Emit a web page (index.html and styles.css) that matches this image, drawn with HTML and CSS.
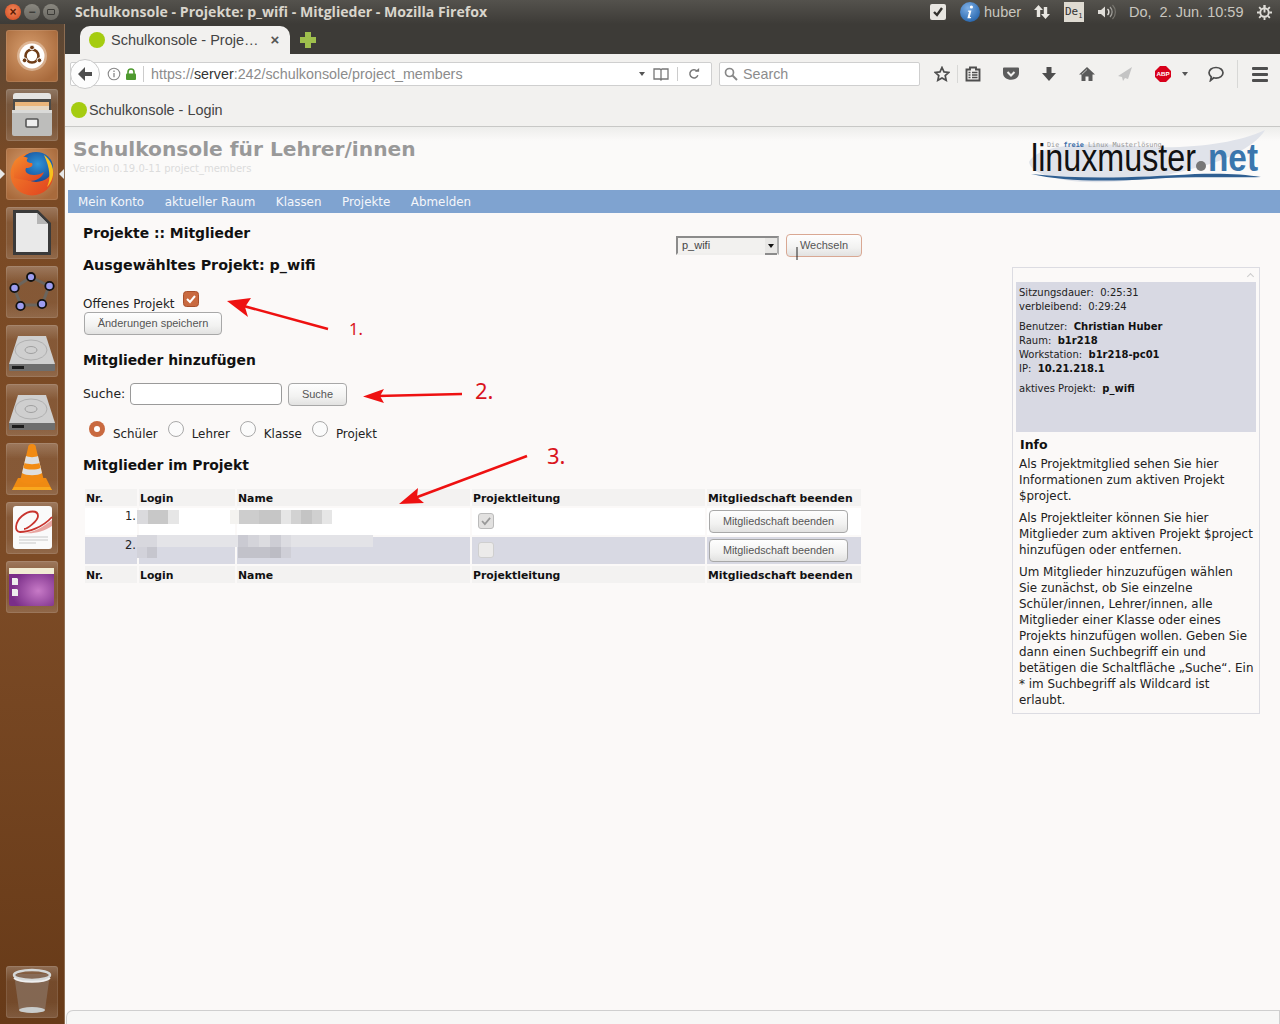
FILE: index.html
```html
<!DOCTYPE html>
<html lang="de">
<head>
<meta charset="utf-8">
<title>Schulkonsole - Projekte: p_wifi - Mitglieder</title>
<link rel="stylesheet" href="styles.css">
</head>
<body>
<header class="topbar">
  <div class="winbtns">
    <span class="wb wb-close">×</span>
    <span class="wb wb-min">−</span>
    <span class="wb wb-max"><i class="wb-sq"></i></span>
  </div>
  <div class="wintitle">Schulkonsole - Projekte: p_wifi - Mitglieder - Mozilla Firefox</div>
  <div class="indicators">
    <svg class="ind-check" viewBox="0 0 16 16"><rect width="16" height="16" rx="2" fill="#e8e6e1"/><path d="M4 8l3 3 5-7" fill="none" stroke="#33322e" stroke-width="2.4"/></svg>
    <svg class="ind-info" viewBox="0 0 20 20"><defs><radialGradient id="ig" cx=".4" cy=".3" r=".8"><stop offset="0" stop-color="#7fb0e6"/><stop offset="1" stop-color="#1f5fa8"/></radialGradient></defs><circle cx="10" cy="10" r="10" fill="url(#ig)"/><circle cx="11.4" cy="5" r="1.6" fill="#fff"/><path d="M8.2 8.6h3.2l-1.6 6.4h1.4l-.4 1.2H7.4l1.7-6.5H7.8z" fill="#fff"/></svg>
    <span class="ind-user">huber</span>
    <svg class="ind-arrows" viewBox="0 0 16 16"><path d="M4.5 1L9 6H6.2v7H2.8V6H0z" fill="#e8e6e1"/><path d="M11.5 15L7 10h2.8V3h3.4v7H16z" fill="#e8e6e1"/></svg>
    <span class="ind-lang">De<sub class="ind-sub">1</sub></span>
    <svg class="ind-vol" viewBox="0 0 20 16"><path d="M1 6h3l4-3.500v11L4 10H1z" fill="#dfddd8"/><path d="M10.500 5a4 4 0 0 1 0 6" fill="none" stroke="#dfddd8" stroke-width="1.500"/><path d="M13 3a7 7 0 0 1 0 10" fill="none" stroke="#a5a39e" stroke-width="1.200"/><path d="M15.500 1a10 10 0 0 1 0 14" fill="none" stroke="#77756f" stroke-width="1.200"/></svg>
    <span class="ind-date">Do,&nbsp; 2. Jun. 10:59</span>
    <svg class="ind-gear" viewBox="0 0 16 16"><g fill="none" stroke="#dfddd8"><circle cx="8" cy="8" r="4.500" stroke-width="2"/><path d="M8 0v3M8 13v3M0 8h3M13 8h3M2.300 2.300l2.100 2.100M11.600 11.600l2.100 2.100M2.300 13.700l2.100-2.100M11.600 4.400l2.100-2.100" stroke-width="2"/></g><rect x="7" y="0" width="2" height="8" fill="#dfddd8"/></svg>
  </div>
</header>

<div class="desk">
  <nav class="launcher">
    <div class="tile tile-on">
      <svg viewBox="0 0 52 52"><circle cx="26" cy="26" r="15" fill="#f4e3d2" opacity=".45"/><circle cx="26" cy="26" r="12.500" fill="#fff"/><circle cx="26" cy="26" r="6.500" fill="none" stroke="#6e3c17" stroke-width="2.600"/><g fill="#6e3c17" stroke="#fff" stroke-width="1"><circle cx="26" cy="17.500" r="2.400"/><circle cx="18.600" cy="30.300" r="2.400"/><circle cx="33.400" cy="30.300" r="2.400"/></g></svg>
    </div>
    <div class="tile">
      <svg viewBox="0 0 52 52"><path d="M7 7a3 3 0 0 1 3-3h32a3 3 0 0 1 3 3v4H7z" fill="#e4e4e2"/><rect x="7" y="10" width="38" height="14" fill="#4a4a48"/><rect x="9" y="13" width="34" height="5" fill="#eab57a"/><rect x="9" y="17" width="34" height="5" fill="#e6d7c2"/><rect x="6" y="21" width="40" height="26" rx="2" fill="#bdbdbb"/><rect x="6" y="21" width="40" height="3" fill="#dadad8"/><rect x="20" y="30" width="12" height="8" rx="1" fill="#eee" stroke="#555" stroke-width="1.600"/></svg>
    </div>
    <div class="tile tile-on tile-ff">
      <svg viewBox="0 0 52 52"><defs><radialGradient id="ffb" cx=".55" cy=".4" r=".7"><stop offset="0" stop-color="#2f95d8"/><stop offset="1" stop-color="#123f8c"/></radialGradient><linearGradient id="ffo" x1="0" y1="0" x2="1" y2="1"><stop offset="0" stop-color="#f58a2c"/><stop offset="1" stop-color="#e0401f"/></linearGradient></defs><circle cx="26" cy="26" r="21.500" fill="url(#ffo)"/><ellipse cx="30" cy="19" rx="17" ry="15" fill="url(#ffb)"/><path d="M8 14C12 8 18 8 22 10c-3 3 0 5 4 5 2 3-2 5-6 5-2 4 2 7 8 7 4 0 7-1 10-3-2 6-8 9-14 9L8 30z" fill="url(#ffo)"/><path d="M38 7c6 4 10 12 9 20-1 6-4 10-6 12 4-8 3-19-3-32z" fill="#f8c21e"/></svg>
    </div>
    <div class="tile">
      <svg viewBox="0 0 52 52"><path d="M7 3h25l13 13v32H7z" fill="#3a3a3a"/><path d="M10 6h21l11 11v28H10z" fill="#e9e9e9"/><path d="M31 6v11h11z" fill="#b5b5b5"/></svg>
    </div>
    <div class="tile">
      <svg viewBox="0 0 52 52"><path d="M25 11L43 20 36 39H15L8 22z" fill="none" stroke="#6b655d" stroke-width="3"/><g fill="#9d9df0" stroke="#111" stroke-width="1.800"><circle cx="25" cy="11" r="4"/><circle cx="43.500" cy="20" r="4.200"/><circle cx="36" cy="38" r="4.200"/><circle cx="14.500" cy="40" r="4.200"/><circle cx="8.500" cy="22" r="4.200"/></g></svg>
    </div>
    <div class="tile">
      <svg viewBox="0 0 52 52"><use href="#disk"/></svg>
    </div>
    <div class="tile">
      <svg viewBox="0 0 52 52"><defs><g id="disk"><path d="M12 11h28l9 28v6H3v-6z" fill="#cfcfcf"/><path d="M3 39h46v6a1 1 0 0 1-1 1H4a1 1 0 0 1-1-1z" fill="#6e6e6e"/><rect x="6" y="41" width="12" height="3" fill="#1c1c1c"/><ellipse cx="25" cy="25" rx="16" ry="10" fill="none" stroke="#b0b0b0"/><ellipse cx="25" cy="25" rx="6" ry="3.500" fill="none" stroke="#a0a0a0"/></g></defs><use href="#disk"/></svg>
    </div>
    <div class="tile">
      <svg viewBox="0 0 52 52"><path d="M6 47l6-12h28l6 12z" fill="#ef8a12"/><path d="M14 38c4 4 20 4 24 0l-8-33a4 4 0 0 0-8 0z" fill="#f28b13"/><path d="M20 13l-4 17c4 3 16 3 20 0l-4-17c-3 1.500-9 1.500-12 0z" fill="#dedede"/><path d="M18.500 20c3 1.500 12 1.500 15 0l1 5c-4 2-13 2-17 0z" fill="#f28b13"/><path d="M6 47h40l-2-3H8z" fill="#f9a81e"/></svg>
    </div>
    <div class="tile">
      <svg viewBox="0 0 52 52"><rect x="7" y="4" width="39" height="43" rx="3" fill="#fafafa"/><path d="M46 15C36 26 22 30 14 30 8 30 9 20 16 14s16-6 16 0c0 5-11 13-14 13" fill="none" stroke="#c8342e" stroke-width="1.800"/><path d="M17 31c10 0 20-6 29-13v6c-9 6-18 8-29 7z" fill="#e8a5a0"/><path d="M13 35h29M13 38h29M13 41h17" stroke="#bbb" stroke-width=".8"/></svg>
    </div>
    <div class="tile">
      <svg viewBox="0 0 52 52"><defs><radialGradient id="pg" cx=".65" cy=".6" r=".6"><stop offset="0" stop-color="#c77ac7"/><stop offset="1" stop-color="#7a2e88"/></radialGradient></defs><rect x="3" y="7" width="45" height="38" rx="2" fill="url(#pg)"/><rect x="3" y="7" width="45" height="6" fill="#f1ecd4"/><path d="M6 17h5l1 1v6H6zM6 28h5l1 1v6H6z" fill="#eee"/></svg>
    </div>
    <div class="tile tile-trash">
      <svg viewBox="0 0 52 52"><path d="M8 8l5 36c2 3 24 3 26 0l5-36z" fill="#8a7464" opacity=".7"/><ellipse cx="26" cy="44" rx="13" ry="3" fill="#c9cccc"/><ellipse cx="26" cy="9" rx="18" ry="5" fill="none" stroke="#d5d8d8" stroke-width="2.500"/><path d="M8 12c6 5 30 5 36 0" fill="none" stroke="#efefef" stroke-width="2"/></svg>
    </div>
  </nav>

  <main class="browser">
    <div class="tabstrip">
      <div class="tab">
        <span class="favdot"></span>
        <span class="tab-title">Schulkonsole - Proje…</span>
        <span class="tab-close">×</span>
      </div>
      <svg class="newtab" viewBox="0 0 16 16"><path d="M5 0h6v5h5v6h-5v5H5v-5H0V5h5z" fill="#9fbf4d"/></svg>
    </div>

    <div class="toolbar">
      <div class="backbtn"><svg viewBox="0 0 16 16"><path d="M8 1L1 8l7 7V10h7V6H8z" fill="#4e4e4e"/></svg></div>
      <div class="urlbar">
        <svg class="u-info" viewBox="0 0 14 14"><circle cx="7" cy="7" r="5.800" fill="none" stroke="#888" stroke-width="1.100"/><path d="M7 6v4.200M7 3.500v1.400" stroke="#888" stroke-width="1.300"/></svg>
        <svg class="u-lock" viewBox="0 0 12 12"><path d="M3 6V4a3 3 0 0 1 6 0v2" fill="none" stroke="#4e9a2f" stroke-width="1.600"/><rect x="1" y="5.500" width="10" height="6.500" rx="1" fill="#4e9a2f"/></svg>
        <span class="u-sep"></span>
        <span class="u-text">https://<b class="u-host">server</b>:242/schulkonsole/project_members</span>
        <span class="u-drop"></span>
        <svg class="u-reader" viewBox="0 0 16 14"><path d="M1 2h6l1 1 1-1h6v10H9l-1 1-1-1H1zM8 3v9" fill="none" stroke="#777" stroke-width="1.300"/></svg>
        <span class="u-sep u-sep2"></span>
        <svg class="u-reload" viewBox="0 0 14 14"><path d="M11.500 8.500A4.800 4.800 0 1 1 10.500 3.500" fill="none" stroke="#777" stroke-width="1.700"/><path d="M8 4.500h5V0z" fill="#777"/></svg>
      </div>
      <div class="searchbar">
        <svg class="s-icon" viewBox="0 0 14 14"><circle cx="5.500" cy="5.500" r="4" fill="none" stroke="#888" stroke-width="1.700"/><path d="M8.500 8.500l4.500 4.500" stroke="#888" stroke-width="2"/></svg>
        <span class="s-text">Search</span>
      </div>
      <svg class="ti ti-star" viewBox="0 0 16 16"><path d="M8 1.500l2 4.400 4.800.5-3.600 3.200 1 4.700L8 11.900l-4.200 2.400 1-4.700L1.200 6.400 6 5.900z" fill="none" stroke="#4e4e4e" stroke-width="1.700"/></svg>
      <span class="ti-sep"></span>
      <svg class="ti ti-clip" viewBox="0 0 16 16"><path d="M1.500 3.500h3.500V1.500h6v2h3.500v11h-13z" fill="none" stroke="#4e4e4e" stroke-width="1.900"/><path d="M3.500 6.500h2M7 6.500h5.500M3.500 9h2M7 9h5.500M3.500 11.500h2M7 11.500h5.500" stroke="#4e4e4e" stroke-width="1.500"/></svg>
      <svg class="ti ti-gap" viewBox="0 0 16 16"><path d="M1 1.500h14a1 1 0 0 1 1 1V7c0 9-16 9-16 0V2.500a1 1 0 0 1 1-1z" fill="#5c5c5c"/><path d="M4.500 6L8 9.500 11.500 6" fill="none" stroke="#f1f0ee" stroke-width="2"/></svg>
      <svg class="ti ti-gap" viewBox="0 0 16 16"><path d="M5.500 1h5v6H15l-7 8-7-8h4.500z" fill="#4e4e4e"/></svg>
      <svg class="ti ti-gap" viewBox="0 0 16 16"><path d="M8 1L0 8.500h2.500V15h4v-4.500h3V15h4V8.500H16z" fill="#5a5a5a"/><path d="M8 3.500L3 8.200" stroke="#f1f0ee" stroke-width=".7"/></svg>
      <svg class="ti ti-gap" viewBox="0 0 16 16"><path d="M15 1L1 10l4 1 1 4 2-3 3 1z" fill="#c4c4c4"/></svg>
      <svg class="ti ti-gap" viewBox="0 0 16 16"><path d="M5 0h6l5 5v6l-5 5H5l-5-5V5z" fill="#d8001b"/><text x="8" y="10.300" class="abp">ABP</text></svg>
      <span class="abp-drop"></span>
      <svg class="ti ti-bubble" viewBox="0 0 16 16"><path d="M8 1.500c3.900 0 7 2.300 7 5.300s-3.100 5.300-7 5.300c-.8 0-1.500-.1-2.200-.3L2.500 14.500l.8-3.500C1.900 9.900 1 8.500 1 6.800 1 3.800 4.100 1.500 8 1.500z" fill="none" stroke="#4e4e4e" stroke-width="1.700"/></svg>
      <span class="ti-sep ti-sep2"></span>
      <span class="hamburger"><i></i><i></i><i></i></span>
    </div>

    <div class="bookmarks">
      <span class="favdot"></span>
      <span class="bm-title">Schulkonsole - Login</span>
    </div>

    <div class="page">
      <div class="sitehead">
        <div class="sitetitle">
          <div class="sitename">Schulkonsole für Lehrer/innen</div>
          <div class="siteversion">Version 0.19.0-11 project_members</div>
        </div>
        <svg class="logo" viewBox="0 0 240 53">
          <path d="M4 32C14 14 60 12 110 16 160 20 210 14 240 0 232 14 205 30 170 38 120 52 70 55 40 50 20 46 6 42 4 32z" fill="#e0e3ea"/>
          <text x="22" y="17" class="logo-tag">Die <tspan class="logo-free">freie</tspan> Linux Musterlösung</text>
          <text x="6" y="41" class="logo-main" textLength="165" lengthAdjust="spacingAndGlyphs">linuxmuster</text>
          <circle cx="176" cy="36" r="5" fill="#777"/>
          <text x="183" y="41" class="logo-net" textLength="50" lengthAdjust="spacingAndGlyphs">net</text>
          <path d="M6 44C60 50 120 47 170 44c25-1 50 0 66 3-30 1-70-1-110 2-50 3-90 2-120-5z" fill="#2f5f92"/>
        </svg>
      </div>

      <div class="mainnav">
        <a class="navlink">Mein Konto</a>
        <a class="navlink">aktueller Raum</a>
        <a class="navlink">Klassen</a>
        <a class="navlink">Projekte</a>
        <a class="navlink">Abmelden</a>
      </div>

      <div class="columns">
        <section class="leftcol">
          <div class="headrow">
            <h2 class="heading">Projekte :: Mitglieder</h2>
            <div class="switcher">
              <div class="selectbox"><span class="select-val">p_wifi</span><span class="select-arrow"></span></div>
              <button class="btn btn-hover">Wechseln</button>
            </div>
          </div>
          <h3 class="heading heading-wide">Ausgewähltes Projekt: p_wifi</h3>
          <div class="openrow">
            <span class="txt">Offenes Projekt</span>
            <svg class="chk" viewBox="0 0 16 16"><rect x=".5" y=".5" width="15" height="15" rx="3" fill="#c96a40" stroke="#a8502c"/><path d="M4 8l3 3 5-6" fill="none" stroke="#fff" stroke-width="2"/></svg>
          </div>
          <button class="btn btn-save">Änderungen speichern</button>

          <h3 class="heading h-add">Mitglieder hinzufügen</h3>
          <div class="searchrow">
            <label class="txt search-label">Suche:</label>
            <span class="field"></span>
            <button class="btn btn-find">Suche</button>
          </div>
          <div class="radiorow">
            <svg class="radio" viewBox="0 0 16 16"><circle cx="8" cy="8" r="8" fill="#c96a40"/><circle cx="8" cy="8" r="3" fill="#fff"/></svg><span class="txt">Schüler</span>
            <span class="radio radio-off"></span><span class="txt">Lehrer</span>
            <span class="radio radio-off"></span><span class="txt">Klasse</span>
            <span class="radio radio-off"></span><span class="txt">Projekt</span>
          </div>
          <h3 class="heading h-mem">Mitglieder im Projekt</h3>

          <div class="tablewrap">
            <table class="members">
              <thead>
                <tr><th class="c1">Nr.</th><th class="c2">Login</th><th class="c3">Name</th><th class="c4">Projektleitung</th><th class="c5">Mitgliedschaft beenden</th></tr>
              </thead>
              <tbody>
                <tr class="odd">
                  <td class="num">1.</td><td></td><td></td>
                  <td><span class="box box-on"><svg viewBox="0 0 16 16"><path d="M3.500 8l3.200 3.500 6-7" fill="none" stroke="#999" stroke-width="2"/></svg></span></td>
                  <td><button class="btn btn-end">Mitgliedschaft beenden</button></td>
                </tr>
                <tr class="even">
                  <td class="num">2.</td><td></td><td></td>
                  <td><span class="box"></span></td>
                  <td><button class="btn btn-end">Mitgliedschaft beenden</button></td>
                </tr>
              </tbody>
              <tfoot>
                <tr><th>Nr.</th><th>Login</th><th>Name</th><th>Projektleitung</th><th>Mitgliedschaft beenden</th></tr>
              </tfoot>
            </table>
            <svg class="redact" viewBox="0 0 250 60" width="250" height="60" shape-rendering="crispEdges">
              <rect x="0" y="0" width="11" height="14" fill="#dadadd"/><rect x="11" y="0" width="20" height="14" fill="#c8c8c8"/><rect x="31" y="0" width="11" height="14" fill="#e6e6e6"/>
              <rect x="93" y="0" width="9" height="14" fill="#f4f3f0"/><rect x="102" y="0" width="20" height="14" fill="#cdcdcd"/><rect x="122" y="0" width="22" height="14" fill="#c6c6c6"/><rect x="144" y="0" width="10" height="14" fill="#e6e6e6"/><rect x="154" y="0" width="10" height="14" fill="#d2d2d2"/><rect x="164" y="0" width="11" height="14" fill="#c4c4c4"/><rect x="175" y="0" width="10" height="14" fill="#d0d0d0"/><rect x="185" y="0" width="10" height="14" fill="#e6e6e6"/>
              <rect x="0" y="25" width="20" height="12" fill="#d8d8de"/><rect x="20" y="25" width="81" height="12" fill="#e4e4e8"/><rect x="101" y="25" width="10" height="12" fill="#cacad2"/><rect x="111" y="25" width="11" height="12" fill="#d4d4da"/><rect x="122" y="25" width="11" height="12" fill="#dcdce0"/><rect x="133" y="25" width="11" height="12" fill="#cdcdd4"/><rect x="144" y="25" width="10" height="12" fill="#dcdce1"/><rect x="154" y="25" width="82" height="12" fill="#e3e3e7"/>
              <rect x="0" y="37" width="10" height="11" fill="#d2d2da"/><rect x="10" y="37" width="10" height="11" fill="#c6c6ce"/><rect x="101" y="37" width="32" height="11" fill="#c2c2ca"/><rect x="133" y="37" width="11" height="11" fill="#bcbcc4"/><rect x="144" y="37" width="10" height="11" fill="#cfcfd7"/>
            </svg>
          </div>
        </section>

        <aside class="sidebar">
          <div class="sb-chevron"></div>
          <div class="statusbox">
            <p class="st-p">Sitzungsdauer:&nbsp; 0:25:31<br>verbleibend:&nbsp; 0:29:24</p>
            <p class="st-p">Benutzer:&nbsp; <b>Christian Huber</b><br>Raum:&nbsp; <b>b1r218</b><br>Workstation:&nbsp; <b>b1r218-pc01</b><br>IP:&nbsp; <b>10.21.218.1</b></p>
            <p class="st-p">aktives Projekt:&nbsp; <b>p_wifi</b></p>
          </div>
          <h4 class="info-h">Info</h4>
          <p class="info-p">Als Projektmitglied sehen Sie hier Informationen zum aktiven Projekt $project.</p>
          <p class="info-p">Als Projektleiter können Sie hier Mitglieder zum aktiven Projekt $project hinzufügen oder entfernen.</p>
          <p class="info-p">Um Mitglieder hinzuzufügen wählen Sie zunächst, ob Sie einzelne Schüler/innen, Lehrer/innen, alle Mitglieder einer Klasse oder eines Projekts hinzufügen wollen. Geben Sie dann einen Suchbegriff ein und betätigen die Schaltfläche „Suche“. Ein * im Suchbegriff als Wildcard ist erlaubt.</p>
        </aside>
      </div>

      <svg class="marks" viewBox="0 0 1215 500" width="1215" height="500">
        <path d="M732 120v13" stroke="#222" stroke-width="1"/>
        <path d="M263 202L175 178" class="mk-line"/><path d="M162 174L186 171 180 180 183 190z" class="mk-head"/>
        <path d="M397 267L312 269" class="mk-line"/><path d="M298 269.500L319 262 315 269 319 276z" class="mk-head"/>
        <path d="M462 329L347 372" class="mk-line"/><path d="M334 377L353 361 352 370 359 376z" class="mk-head"/>
        <text x="284" y="208" class="mk-num mk-small">1.</text>
        <text x="410" y="272" class="mk-num">2.</text>
        <text x="482" y="337" class="mk-num">3.</text>
      </svg>
    </div>

    <div class="hscroll"><span class="hthumb"></span></div>
  </main>
</div>
</body>
</html>
```
FILE: styles.css
```css
* { box-sizing: border-box; }
html, body { margin: 0; height: 100%; }
body {
  width: 1280px; height: 1024px; overflow: hidden;
  display: flex; flex-direction: column;
  font-family: "DejaVu Sans", sans-serif; color: #111; background: #fbf9f8;
}

/* top panel */
.topbar {
  height: 24px; flex: none; display: flex; align-items: center;
  background: linear-gradient(#54524d, #3d3b37); color: #dfdbd2;
}
.winbtns { display: flex; gap: 3px; margin-left: 5px; width: 70px; }
.wb {
  width: 16px; height: 16px; border-radius: 50%; display: flex; align-items: center; justify-content: center;
  background: linear-gradient(#8a8880, #6a6862); color: #3c3b37; font: bold 12px/1 "Liberation Sans", sans-serif;
}
.wb-close { background: radial-gradient(circle at 50% 40%, #f28a5c, #d2461c); color: #5c1c05; }
.wb-sq { display: block; width: 8px; height: 6px; border: 1px solid #3c3b37; border-radius: 1px; }
.wintitle { font: bold 14.100px/24px "Open Sans", sans-serif; white-space: nowrap; color: #d9d5cc; }
.indicators { display: flex; align-items: center; margin-left: auto; height: 24px; position: relative; width: 350px; flex: none; }
.ind-check { width: 16px; height: 16px; flex: none; }
.ind-info { width: 20px; height: 20px; margin-left: 14px; flex: none; }
.ind-user { font: 14.500px/24px "Liberation Sans", sans-serif; margin-left: 4px; color: #c9c6bf; width: 37px; }
.ind-arrows { width: 16px; height: 16px; margin-left: 13px; flex: none; }
.ind-lang {
  width: 20px; height: 20px; margin-left: 14px; background: #dfdbd2; color: #333; flex: none;
  font: 11px/20px "DejaVu Sans Mono", monospace; padding-left: 1px; overflow: hidden; white-space: nowrap;
}
.ind-sub { font-size: 7px; line-height: 0; }
.ind-vol { width: 20px; height: 16px; margin-left: 13px; flex: none; }
.ind-date { font: 14.500px/24px "Liberation Sans", sans-serif; margin-left: 12px; color: #c9c6bf; width: 116px; white-space: nowrap; flex: none; }
.ind-gear { width: 15px; height: 15px; margin-left: 12px; flex: none; }

.desk { flex: 1; display: flex; min-height: 0; }

/* launcher */
.launcher {
  width: 65px; flex: none; display: flex; flex-direction: column; gap: 7px; padding: 6px 0 6px 6px;
  background: linear-gradient(#5b4735, #7a4a25 14%, #7c4b26 55%, #673a18);
  border-right: 1px solid #8d6d52;
}
.tile {
  width: 52px; height: 52px; flex: none; border-radius: 3px; position: relative;
  background: linear-gradient(rgba(255,255,255,.26), rgba(255,255,255,.08) 30%, rgba(255,255,255,.08) 70%, rgba(255,255,255,.17));
  box-shadow: inset 0 0 0 1px rgba(255,255,255,.1);
}
.tile svg { display: block; width: 52px; height: 52px; }
.tile-on { background: radial-gradient(circle at 45% 40%, #d9a070, #a86a3c 80%); }
.tile-ff::before, .tile-ff::after {
  content: ""; position: absolute; top: 21px; border: 5px solid transparent;
}
.tile-ff::before { left: -6px; border-left-color: #e8e8e8; border-right-width: 0; }
.tile-ff::after { right: -6px; border-right-color: #e8e8e8; border-left-width: 0; }
.tile-trash { margin-top: auto; }

/* browser */
.browser { flex: 1; min-width: 0; display: flex; flex-direction: column; }
.tabstrip { height: 30px; flex: none; background: #3d3b37; display: flex; align-items: flex-end; padding-left: 15px; }
.tab {
  width: 210px; height: 28px; background: #f2f1ef; border-radius: 10px 10px 0 0; display: flex; align-items: center; padding-left: 9px;
}
.favdot { width: 16px; height: 16px; border-radius: 50%; background: #a5cc10; flex: none; }
.tab-title { font: 14.500px/20px "Liberation Sans", sans-serif; color: #444; margin-left: 6px; white-space: nowrap; }
.tab-close { font: bold 15px/16px "Liberation Sans", sans-serif; color: #555; margin-left: 12px; }
.newtab { width: 16px; height: 16px; margin: 0 0 6px 10px; flex: none; }

.toolbar { height: 42px; flex: none; background: #f2f1ef; display: flex; align-items: center; position: relative; padding: 0 0 2px 5px; }
.backbtn {
  position: absolute; left: 5px; top: 5px; width: 30px; height: 30px; border-radius: 50%;
  background: #fdfdfd; border: 1px solid #c9c9c9; display: flex; align-items: center; justify-content: center; z-index: 1;
}
.backbtn svg { width: 16px; height: 16px; }
.urlbar {
  width: 642px; height: 24px; background: #fff; border: 1px solid #cfcfcf; border-radius: 2px;
  display: flex; align-items: center; padding-left: 36px; flex: none;
}
.u-info { width: 14px; height: 14px; flex: none; }
.u-lock { width: 12px; height: 12px; margin-left: 4px; flex: none; }
.u-sep { width: 1px; height: 16px; background: #ccc; margin-left: 6px; flex: none; }
.u-text { font: 14.300px/22px "Liberation Sans", sans-serif; color: #8c8c8c; margin-left: 7px; white-space: nowrap; width: 488px; flex: none; }
.u-host { font-weight: normal; color: #333; }
.u-drop { width: 0; height: 0; border: 3px solid transparent; border-top: 4px solid #555; border-bottom-width: 0; flex: none; }
.u-reader { width: 16px; height: 14px; margin-left: 8px; flex: none; }
.u-sep2 { margin-left: 8px; height: 14px; }
.u-reload { width: 12px; height: 12px; margin-left: 10px; flex: none; }
.searchbar {
  width: 201px; height: 24px; margin-left: 7px; background: #fff; border: 1px solid #cfcfcf; border-radius: 2px;
  display: flex; align-items: center; padding-left: 4px; flex: none;
}
.s-icon { width: 14px; height: 14px; flex: none; }
.s-text { font: 14.300px/22px "Liberation Sans", sans-serif; color: #8c8c8c; margin-left: 5px; }
.ti { width: 16px; height: 16px; flex: none; }
.ti-star { margin-left: 14px; }
.ti-sep { width: 1px; height: 18px; background: #d8d8d6; margin-left: 7px; flex: none; }
.ti-clip { margin-left: 7px; }
.ti-gap { margin-left: 22px; }
.abp { font: bold 6.200px "Liberation Sans", sans-serif; fill: #fff; text-anchor: middle; }
.abp-drop { width: 0; height: 0; border: 3px solid transparent; border-top: 4px solid #555; border-bottom-width: 0; margin-left: 11px; flex: none; }
.ti-bubble { margin-left: 20px; }
.ti-sep2 { margin-left: 13px; height: 28px; }
.hamburger { display: flex; flex-direction: column; gap: 3px; width: 16px; margin-left: 14px; flex: none; }
.hamburger i { display: block; height: 3px; background: #4e4e4e; border-radius: 1px; }

.bookmarks { height: 31px; flex: none; background: #f2f1ef; display: flex; align-items: center; padding: 0 0 3px 6px; border-bottom: 1px solid #c8c8c6; }
.bm-title { font: 14.400px/20px "Liberation Sans", sans-serif; color: #444; margin-left: 2px; white-space: nowrap; }

.page { flex: 1; min-height: 0; position: relative; background: #fbf9f8; overflow: hidden; }
.sitehead {
  height: 63px; display: flex; justify-content: space-between;
  background: linear-gradient(#ededeb, #fbfaf9 22%); padding: 0 15px 0 8px;
}
.sitename { font: bold 20.200px/26px "DejaVu Sans", sans-serif; color: #999; margin-top: 9px; white-space: nowrap; }
.siteversion { font: 10px/13px "DejaVu Sans", sans-serif; color: #dcdcdc; }
.logo { width: 240px; height: 53px; margin-top: 3px; flex: none; }
.logo-tag { font: 6.800px "DejaVu Sans Mono", monospace; fill: #999; }
.logo-free { fill: #3d6ea8; font-weight: bold; }
.logo-main { font: 38px "Liberation Sans", sans-serif; fill: #111; }
.logo-net { font: bold 38px "Liberation Sans", sans-serif; fill: #3a76ad; }

.mainnav { height: 23px; margin-left: 3px; background: #7fa3d0; display: flex; gap: 20.500px; padding-left: 10px; }
.navlink { font: 11.900px/24px "DejaVu Sans", sans-serif; color: #f4f6fa; white-space: nowrap; }

.columns { display: flex; padding-left: 18px; }
.leftcol { width: 780px; flex: none; }
.headrow { height: 32px; margin-top: 11px; display: flex; justify-content: space-between; }
.heading { font: bold 13.900px/18px "DejaVu Sans", sans-serif; margin: 0; color: #111; white-space: nowrap; }
.heading-wide { font-size: 14.300px; }
.switcher { display: flex; align-items: flex-start; margin-top: 10px; padding-right: 1px; }
.selectbox {
  width: 103px; height: 19px; margin-top: 2px; margin-right: 7px; background: #f2f1ef; display: flex; justify-content: space-between; align-items: center;
  border-top: 2px solid #8b8b8b; border-left: 2px solid #8b8b8b; border-right: 2px solid #b0b0b0; border-bottom: 2px solid #f0efed; padding-left: 4px;
}
.select-val { font: 11px/15px "Liberation Sans", sans-serif; color: #444; }
.select-arrow {
  width: 12px; height: 17px; margin-bottom: -2px; background: #e8e7e5; border-bottom: 2px solid #8b8b8b; position: relative; flex: none;
}
.select-arrow::after { content: ""; position: absolute; left: 3px; top: 6px; border: 3px solid transparent; border-top: 4px solid #111; border-bottom-width: 0; }
.btn {
  font: 11px/1 "Liberation Sans", sans-serif; color: #555; padding: 0; white-space: nowrap; display: block;
  background: linear-gradient(#fefefe, #f2f2f1 60%, #e2e2e1); border: 1px solid #a8a8a8; border-radius: 4px;
}
.btn-hover { width: 76px; height: 23px; border-color: #d9a893; }
.btn-save { width: 138px; height: 23px; margin-left: 1px; }
.btn-find { width: 59px; height: 23px; margin-left: 6px; }
.btn-end { width: 139px; height: 23px; margin-left: 1px; font-size: 10.800px; }
.openrow { height: 21px; margin-top: 17px; display: flex; align-items: flex-start; }
.txt { font: 12px/16px "DejaVu Sans", sans-serif; color: #222; white-space: nowrap; }
.openrow .txt { margin-top: 5px; }
.chk { width: 16px; height: 16px; margin-left: 8px; flex: none; }
.h-add { margin-top: 16px; }
.searchrow { height: 23px; margin-top: 14px; display: flex; align-items: center; }
.search-label { font-size: 12.400px; width: 42px; margin-top: -2px; }
.field { width: 152px; height: 22px; margin-left: 5px; background: #fff; border: 1px solid #9a9a9a; border-radius: 4px; margin-top: -1px; }
.radiorow { height: 21px; margin-top: 15px; padding-left: 6px; display: flex; align-items: flex-start; }
.radiorow .txt { font-size: 11.900px; margin-top: 5px; margin-left: 8px; margin-right: 10px; }
.radio { width: 16px; height: 16px; flex: none; display: block; }
.radio-off { border: 1px solid #a9a9a9; border-radius: 50%; background: #fbfbfb; }
.h-mem { margin-top: 14px; }

.tablewrap { position: relative; margin-top: 13px; }
.members { border-collapse: separate; border-spacing: 2px; table-layout: fixed; width: 780px; }
.c1 { width: 52px; } .c2 { width: 96px; } .c3 { width: 233px; } .c4 { width: 233px; }
.members th { height: 17px; padding: 2px 1px 0; background: #f3f2f1; text-align: left; font: bold 10.850px/15px "DejaVu Sans", sans-serif; white-space: nowrap; color: #111; }
.members td { height: 27px; padding: 0 1px; vertical-align: top; }
.odd td { background: #fff; }
.even td { background: #d8d9e3; }
.num { text-align: right; font: 11.500px/17px "DejaVu Sans", sans-serif; color: #222; }
.box { display: block; width: 16px; height: 16px; margin: 5px 0 0 5px; border: 1px solid #cfcfcf; border-radius: 3px; background: #ecebea; }
.box-on { background: #e2e1e0; border-color: #bbb; }
.box svg { display: block; width: 14px; height: 14px; }
.btn-end { margin-top: 2px; }
.redact { position: absolute; left: 54px; top: 23px; }

/* sidebar */
.sidebar {
  width: 248px; height: 447px; flex: none; margin: 54px 0 0 149px; padding: 14px 3px 0 3px; position: relative;
  border: 1px solid #dcdce2; background: #fbf9f8;
}
.sb-chevron { position: absolute; right: 6px; top: 6px; width: 5px; height: 5px; border-left: 1px solid #ccc; border-top: 1px solid #ccc; transform: rotate(45deg); }
.statusbox { height: 150px; background: #d8d9e3; padding: 4px 3px; font: 10px/14px "DejaVu Sans", sans-serif; color: #222; }
.st-p { margin: 0 0 6px; white-space: nowrap; }
.st-p b { color: #111; }
.info-h { font: bold 12.500px/16px "DejaVu Sans", sans-serif; margin: 5px 0 3px 4px; color: #111; }
.info-p { font: 11.900px/16px "DejaVu Sans", sans-serif; margin: 0 2px 6px 3px; color: #222; }

/* annotations */
.marks { position: absolute; left: 0; top: 0; pointer-events: none; }
.mk-line { fill: none; stroke: #ee1111; stroke-width: 2.500; }
.mk-head { fill: #ee1111; }
.mk-num { font: 22px "Noto Sans", sans-serif; fill: #d9141c; }
.mk-small { font-size: 16.500px; }

.hscroll { height: 14px; flex: none; background: #fbf9f8; padding-left: 1px; }
.hthumb { display: block; height: 14px; background: #f7f7f6; border: 1px solid #cfcfcf; border-bottom: 0; border-radius: 7px 0 0 0; }
```
